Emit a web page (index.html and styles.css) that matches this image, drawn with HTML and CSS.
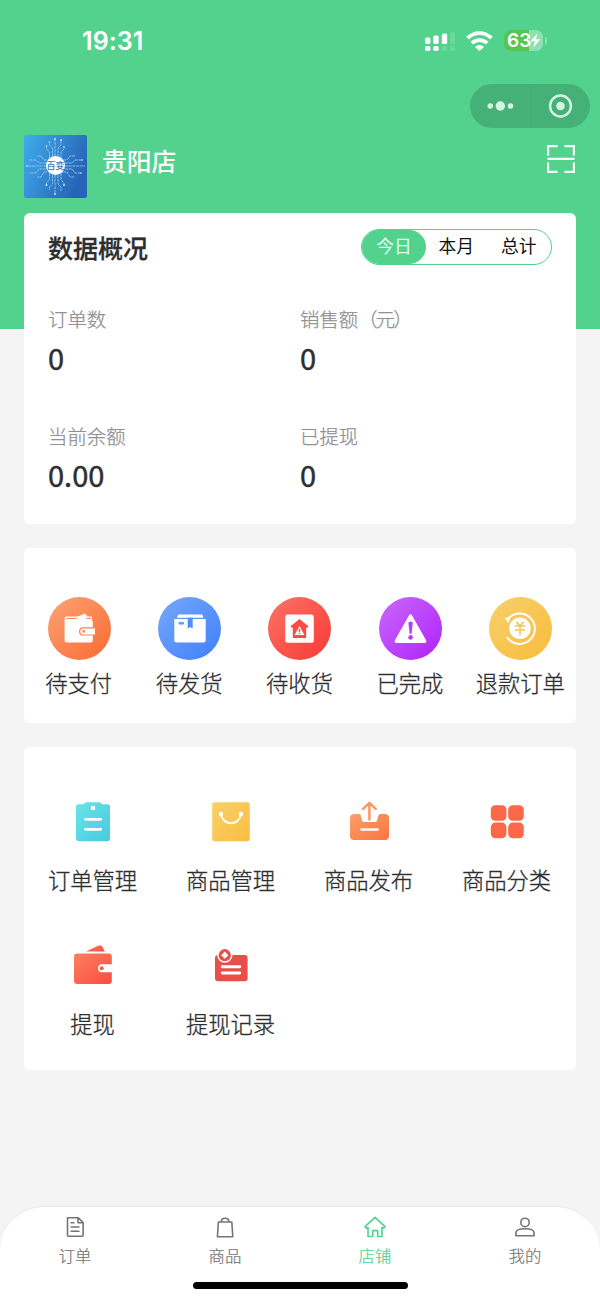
FILE: index.html
```
<!DOCTYPE html>
<html lang="zh-CN">
<head>
<meta charset="UTF-8">
<title>店铺</title>
<link rel="stylesheet" href="styles.css">
</head>
<body>
<div class="app">
  <svg class="defs" width="0" height="0" aria-hidden="true">
    <defs>
      <linearGradient id="cyan" x1="0" y1="0" x2="1" y2="1"><stop offset="0" stop-color="#6be3e7"/><stop offset="1" stop-color="#46cbe0"/></linearGradient>
      <linearGradient id="gold" x1="0" y1="0" x2="1" y2="1"><stop offset="0" stop-color="#f7d06a"/><stop offset="1" stop-color="#fbbe41"/></linearGradient>
      <linearGradient id="orange" x1="0" y1="0" x2="1" y2="1"><stop offset="0" stop-color="#f9a068"/><stop offset="1" stop-color="#fb7440"/></linearGradient>
      <linearGradient id="coral" x1="0" y1="0" x2="1" y2="1"><stop offset="0" stop-color="#fb8163"/><stop offset="1" stop-color="#fb4b3e"/></linearGradient>
      <linearGradient id="logo" x1="0" y1="0" x2="1" y2=".45"><stop offset="0" stop-color="#41aeee"/><stop offset="1" stop-color="#2764b7"/></linearGradient>
    </defs>
  </svg>

  <header class="status">
    <span class="time">19:31</span>
    <div class="status-icons">
      <svg width="32" height="20" viewBox="0 0 32 20" fill="#fff">
        <rect x="1" y="6.4" width="5.4" height="6.6" rx="1.7"/><rect x="9.3" y="4.4" width="5.4" height="8.6" rx="1.7"/><rect x="17.8" y="2.4" width="5.4" height="10.6" rx="1.5"/><rect x="26" y="1" width="5" height="12" rx="1.5" opacity=".15"/>
        <rect x="1" y="15" width="5.4" height="5" rx="1.7"/><rect x="9.3" y="15" width="5.4" height="5" rx="1.7"/><rect x="17.8" y="15" width="5" height="5" rx="1.7" opacity=".15"/><rect x="26" y="15" width="5" height="5" rx="1.7" opacity=".15"/>
      </svg>
      <svg class="wifi" width="27" height="20" viewBox="0 0 27 20" fill="none" stroke="#fff" stroke-width="3.8">
        <path d="M1.5 7.2C8.4.5 18.6.5 25.5 7.2"/><path d="M5.8 12.2C10.3 8.1 16.7 8.1 21.2 12.2"/><path d="M9 15.9Q13.5 12.2 18 15.9L13.5 20Z" fill="#fff" stroke="none"/>
      </svg>
      <div class="battery"><span>63</span>
        <svg width="11" height="15" viewBox="0 0 11 15"><path d="M7.2.4L.4 8.3h4.4L3.4 14.5l7-8.2H6z" fill="#fff"/></svg>
      </div>
    </div>
  </header>

  <div class="capsule-row">
    <div class="capsule">
      <svg width="60" height="44" viewBox="0 0 60 44" fill="#d5f4e3"><circle cx="20.3" cy="22" r="2.8"/><circle cx="30.3" cy="22" r="4.7"/><circle cx="40.5" cy="22" r="2.8"/></svg>
      <svg class="capsule-close" width="60" height="44" viewBox="0 0 60 44" fill="#d5f4e3"><circle cx="30" cy="22" r="10.6" fill="none" stroke="#d5f4e3" stroke-width="2.5"/><circle cx="30" cy="22" r="4.4"/></svg>
    </div>
  </div>

  <section class="store">
    <svg class="logo" width="63" height="63" viewBox="0 0 63 63">
      <rect width="63" height="63" rx="2" fill="url(#logo)"/>
      <g fill="none" stroke="#a9dcf6" stroke-width=".7" stroke-dasharray="3 .7">
        <path d="M31 21V4M28.5 22v-9l-3-3V7M34 22v-9l3-3V5M25.5 23v-6l-3-3v-3M37 23v-6l3-3v-2"/>
        <path d="M31 40v19M28.5 40v9l-3 3v3M34 40v9l3 3v4M25.5 38v7l-3 3v2M37 38v7l3 3v2"/>
        <path d="M22 31H3M22 28h-7l-3-3H5M22 34h-7l-3 4H5M23 25h-3l-3-4h-4M23 37h-3l-3 5h-4"/>
        <path d="M41 31h20M41 28h7l3-3h7M41 34h7l3 4h6M39 25h4l3-4h5M39 37h4l3 5h5"/>
      </g>
      <g fill="#d4effa"><circle cx="31" cy="4" r=".9"/><circle cx="37" cy="5" r=".9"/><circle cx="25.5" cy="7" r=".8"/><circle cx="22.5" cy="11" r=".8"/><circle cx="40" cy="12" r=".8"/><circle cx="31" cy="59" r=".9"/><circle cx="22.5" cy="50" r=".9"/><circle cx="40" cy="50" r=".9"/><circle cx="3" cy="31" r=".8"/><circle cx="58" cy="25" r=".8"/><circle cx="57" cy="38" r=".8"/></g>
      <circle cx="31.5" cy="30.5" r="9.5" fill="#fff"/>
      <text class="logo-text" x="31.5" y="33.8" text-anchor="middle">百变</text>
    </svg>
    <h1 class="store-name">贵阳店</h1>
    <svg class="scan" width="28" height="28" viewBox="0 0 28 28" fill="none" stroke="#fff" stroke-width="2.2"><path d="M1.1 10.5V1.1h9.4M17.5 1.1h9.4v9.4M26.9 17.5v9.4h-9.4M10.5 26.9H1.1v-9.4M.5 13.8h27"/></svg>
  </section>

  <main class="cards">
    <section class="card overview">
      <div class="overview-head">
        <h2>数据概况</h2>
        <div class="segments"><span class="segment active">今日</span><span class="segment">本月</span><span class="segment">总计</span></div>
      </div>
      <dl class="stats">
        <div><dt>订单数</dt><dd>0</dd></div>
        <div><dt>销售额<span class="unit">（元）</span></dt><dd>0</dd></div>
        <div><dt>当前余额</dt><dd>0.00</dd></div>
        <div><dt>已提现</dt><dd>0</dd></div>
      </dl>
    </section>

    <section class="card orders">
      <div class="order"><div class="disc disc-orange">
        <svg width="63" height="63" viewBox="0 0 63 63"><path d="M16.6 21.2q0-1.8 2-1.8h11l7.6-2.8 2.2 2.8H44v4.4h.8v19.7q0 2-2 2H18.6q-2 0-2-2z" fill="#fff"/><path d="M18.3 21.5h10.5M38.6 21.3h4.6" stroke="#fb8c58" stroke-width="1.2"/><path d="M47.5 30.8H35.2q-3.6 0-3.6 3.6t3.6 3.6h12.3z" fill="#fff" stroke="#fb834d" stroke-width="1.2"/><circle cx="35.7" cy="34.4" r="1.3" fill="#fb834d"/></svg>
      </div><span>待支付</span></div>
      <div class="order"><div class="disc disc-blue">
        <svg width="63" height="63" viewBox="0 0 63 63"><path d="M20.2 17.5h24l1.2 3.3H18.8z" fill="#fff"/><path d="M16.3 22h31.4v21.5q0 2-2 2H18.3q-2 0-2-2z" fill="#fff"/><path d="M29.7 20.8h5v10.7l-2.5-1.5-2.5 1.5z" fill="#528cfb"/><rect x="20.5" y="25" width="5.5" height="2.5" rx="1" fill="#6198fb"/></svg>
      </div><span>待发货</span></div>
      <div class="order"><div class="disc disc-red">
        <svg width="63" height="63" viewBox="0 0 63 63"><rect x="17.3" y="17.5" width="28.5" height="28.3" rx="2.5" fill="#fff"/><path d="M31.5 22l9 7.2-1.5 1.7-.8-.6V41H24.8V30.3l-.8.6-1.5-1.7z" fill="#f94c44"/><path d="M31.5 28.9l4.9 9.2h-9.8z" fill="#fff"/><path d="M31.5 32v2.8" stroke="#f94c44" stroke-width="1.5"/><circle cx="31.5" cy="36.5" r=".8" fill="#f94c44"/></svg>
      </div><span>待收货</span></div>
      <div class="order"><div class="disc disc-purple">
        <svg width="63" height="63" viewBox="0 0 63 63"><path d="M31.5 19L45.8 44.3H17.2z" fill="#fff" stroke="#fff" stroke-width="3.2" stroke-linejoin="round"/><path d="M29.4 26q0-1.6 2.2-1.6t2.2 1.6l-1.2 10.8h-2z" fill="#b83dfa"/><circle cx="31.6" cy="40.4" r="2.3" fill="#b83dfa"/></svg>
      </div><span>已完成</span></div>
      <div class="order"><div class="disc disc-gold">
        <svg width="63" height="63" viewBox="0 0 63 63"><path d="M18.6 22.4A15.2 15.2 0 1 1 18 40.1" fill="none" stroke="#fff" stroke-width="2"/><path d="M16.2 21.2l4.6-.2-1.6 4.2z" fill="#fff" stroke="#fff" stroke-linejoin="round"/><circle cx="31" cy="31.3" r="10.8" fill="#fff"/><path d="M27.4 24.8l3.6 4.2 3.6-4.2M26 29h10M26 33h10M31 29v9.5" fill="none" stroke="#f7c352" stroke-width="1.5"/></svg>
      </div><span>退款订单</span></div>
    </section>

    <section class="card tools">
      <div class="tool">
        <svg width="48" height="48" viewBox="0 0 48 48"><path d="M9.4 6.2h5.1q1.5-2 3.5-2h12q2 0 3.5 2h5.1Q41 6.2 41 8.5v32.3q0 2.4-2.4 2.4H9.4Q7 43.2 7 40.8V8.5q0-2.3 2.4-2.3z" fill="url(#cyan)"/><circle cx="24" cy="10" r="2.3" fill="#fff"/><path d="M16.5 21.3h15.2M16.5 31.3h15.2" stroke="#fff" stroke-width="2.8" stroke-linecap="round"/></svg>
        <span>订单管理</span></div>
      <div class="tool">
        <svg width="48" height="48" viewBox="0 0 48 48"><rect x="5.2" y="4.2" width="37.6" height="39" rx="2.3" fill="url(#gold)"/><circle cx="14" cy="16" r="2.2" fill="#fff"/><circle cx="34" cy="16" r="2.2" fill="#fff"/><path d="M14 16c1.5 12.2 18.5 12.2 20 0" fill="none" stroke="#fff" stroke-width="2"/></svg>
        <span>商品管理</span></div>
      <div class="tool">
        <svg width="48" height="48" viewBox="0 0 48 48"><path d="M9 16h5q1.4 0 1.8 1.5l1.3 5q.4 1.5 2 1.5h11q1.6 0 2-1.5l1.3-5q.4-1.5 1.8-1.5H40q4 0 4 4v18q0 4-4 4H9q-4 0-4-4V20q0-4 4-4z" fill="url(#orange)"/><path d="M24.4 21.5V5M18 11l6.4-6.2L30.8 11" fill="none" stroke="#fa955b" stroke-width="2.4" stroke-linecap="round" stroke-linejoin="round"/><path d="M16.5 31.5h16" stroke="#fff" stroke-width="2.5" stroke-linecap="round"/></svg>
        <span>商品发布</span></div>
      <div class="tool">
        <svg width="48" height="48" viewBox="0 0 48 48" fill="#fb6847"><rect x="7.8" y="7.2" width="15.6" height="15.6" rx="4.5"/><rect x="25.2" y="7.2" width="15.6" height="15.6" rx="4.5"/><rect x="7.8" y="24.6" width="15.6" height="15.6" rx="4.5"/><rect x="25.2" y="24.6" width="15.6" height="15.6" rx="4.5"/></svg>
        <span>商品分类</span></div>
      <div class="tool">
        <svg width="48" height="48" viewBox="0 0 48 48"><path d="M17 9.5L29 3.7q3.4-1.3 4.7 1.5l2 4.3z" fill="url(#coral)"/><rect x="5" y="11.5" width="37.8" height="30.6" rx="3.3" fill="url(#coral)"/><path d="M43 22.2H33q-4 0-4 4t4 4h10z" fill="#fff"/><circle cx="32.7" cy="26.2" r="2" fill="#fb5c4a"/></svg>
        <span>提现</span></div>
      <div class="tool">
        <svg width="48" height="48" viewBox="0 0 48 48"><rect x="8" y="13" width="32.6" height="26.3" rx="3" fill="#e94f48"/><circle cx="17.8" cy="13.2" r="7.6" fill="#fff"/><circle cx="17.8" cy="13.2" r="6.1" fill="#e94f48"/><path d="M17.8 9.6l3.6 3.6-3.6 3.6-3.6-3.6z" fill="#fff"/><path d="M15.2 24.7h17.6M15.2 31h17.6" stroke="#fff" stroke-width="2.9" stroke-linecap="round"/></svg>
        <span>提现记录</span></div>
    </section>
  </main>

  <nav class="tabbar">
    <div class="tabs">
      <div class="tab"><svg width="24" height="24" viewBox="0 0 24 24"><path d="M4.5 2.7h10.6l5 4.8v12.7q0 1-1 1H5.5q-1 0-1-1zM15 3v4.8h5M7.5 7.8h4M7.5 12h9M7.5 16.2h9"/></svg><span>订单</span></div>
      <div class="tab"><svg width="24" height="24" viewBox="0 0 24 24"><path d="M5.4 7h13.4l1 14.8H4.4zM8 7q.5-3.8 4.1-3.8T16.2 7"/></svg><span>商品</span></div>
      <div class="tab current"><svg width="24" height="24" viewBox="0 0 24 24"><path d="M12 2.3L22 11.7l-1.3 1.4-1.7-.7v9.1h-4.3v-5.9h-5v5.9H5v-9.1l-1.7.7L2 11.7z"/></svg><span>店铺</span></div>
      <div class="tab"><svg width="24" height="24" viewBox="0 0 24 24"><circle cx="12" cy="7.4" r="4.2"/><path d="M2.9 20.7v-3q0-4 9.1-4t9.1 4v3z"/></svg><span>我的</span></div>
    </div>
    <div class="home-indicator"></div>
  </nav>
</div>
</body>
</html>
```
FILE: styles.css
```
* { box-sizing: border-box; }
body { margin: 0; font-family: "Noto Sans CJK SC", sans-serif; color: #2d2e2f; }
h1, h2, dl, dd { margin: 0; }
svg { display: block; flex-shrink: 0; }
.app { width: 600px; height: 1300px; display: flex; flex-direction: column; overflow: hidden; background: linear-gradient(#52d28d 329px, #f4f4f4 329px); }
.defs { position: absolute; }

.status { height: 84px; padding: 0 53px 3px 82px; display: flex; align-items: center; justify-content: space-between; color: #fff; font-family: Inter, sans-serif; }
.time { font-size: 25px; font-weight: 600; letter-spacing: .1px; }
.status-icons { display: flex; align-items: center; }
.wifi { margin: 0 11px 0 10px; }
.battery { position: relative; width: 39px; height: 21px; margin-right: 4px; padding-left: 3px; border-radius: 7px; display: flex; align-items: center; background: linear-gradient(90deg, #58c551 25px, #8be2b3 25px); font-size: 19px; font-weight: 600; }
.battery svg { margin-left: -1px; }
.battery::after { content: ""; position: absolute; left: 41px; top: 7px; width: 2px; height: 7px; border-radius: 0 2px 2px 0; background: #8be2b3; }

.capsule-row { display: flex; justify-content: flex-end; padding-right: 10px; }
.capsule { display: flex; height: 44px; border-radius: 22px; background: #45b177; }
.capsule-close { border-left: 1px solid #42ac74; }

.store { display: flex; align-items: flex-start; padding: 7px 25px 15px 24px; }
.logo-text { font-size: 9px; font-weight: 500; fill: #2e7cbc; }
.store-name { margin: 6px auto 0 15px; color: #fff; font-size: 24.8px; line-height: 38px; font-weight: 500; }
.scan { margin-top: 10px; }

.cards { display: flex; flex-direction: column; gap: 24px; padding: 0 24px; }
.card { background: #fff; border-radius: 6px; }
.overview { height: 311px; padding: 16px 24px 0; }
.overview-head { display: flex; justify-content: space-between; align-items: center; height: 36px; }
.overview-head h2 { font-size: 25px; line-height: 36px; font-weight: 500; -webkit-text-stroke: .3px; }
.segments { display: grid; grid-template-columns: 64px 1fr 1fr; width: 191px; height: 36px; border: 1.5px solid #52d28d; border-radius: 18px; overflow: hidden; color: #111; font-size: 17.8px; line-height: 31px; text-align: center; }
.segment { padding-right: 2px; }
.segment.active { padding-right: 0; color: #e5fbef; background: #52d28d; border-radius: 0 17px 17px 0; }
.stats { display: grid; grid-template-columns: 252px 252px; grid-auto-rows: 117px; margin-top: 40px; }
.stats dt { color: #8f9091; font-size: 19.4px; line-height: 28px; font-weight: 300; -webkit-text-stroke: .25px; }
.unit { letter-spacing: -1.8px; }
.stats dd { font-size: 29px; line-height: 34px; margin-top: 7px; font-weight: 400; -webkit-text-stroke: .45px; }

.orders { display: grid; grid-template-columns: repeat(5, 1fr); height: 175px; padding-top: 49px; }
.order { display: flex; flex-direction: column; align-items: center; font-size: 22.3px; line-height: 32px; font-weight: 300; -webkit-text-stroke: .3px; white-space: nowrap; }
.order span { margin-left: -1px; }
.disc { width: 63px; height: 63px; margin-bottom: 6px; border-radius: 50%; }
.disc-orange { background: linear-gradient(135deg, #fba475, #fb6a31); }
.disc-blue { background: linear-gradient(135deg, #76a8fa, #3f80fb); }
.disc-red { background: linear-gradient(135deg, #fb7368, #fa3933); }
.disc-purple { background: linear-gradient(135deg, #ca69fa, #af22fa); }
.disc-gold { background: linear-gradient(135deg, #f7d06f, #f9bc38); }

.tools { display: grid; grid-template-columns: repeat(4, 1fr); grid-auto-rows: 144px; height: 323px; padding-top: 51px; }
.tool { display: flex; flex-direction: column; align-items: center; gap: 17px; font-size: 22.3px; line-height: 32px; font-weight: 300; -webkit-text-stroke: .3px; }
.tool span { margin-left: -1px; }

.tabbar { height: 94px; margin-top: auto; background: #fff; border-top: 1px solid #e9e9e9; border-radius: 44px 44px 0 0; }
.tabs { display: grid; grid-template-columns: repeat(4, 1fr); height: 75px; padding-top: 8px; }
.tab { display: flex; flex-direction: column; align-items: center; gap: 4px; color: #757575; font-size: 16.4px; line-height: 24px; font-weight: 300; -webkit-text-stroke: .2px; }
.tab svg { fill: none; stroke: currentColor; stroke-width: 1.6; stroke-linejoin: round; }
.tab.current { color: #52d28d; }
.home-indicator { width: 215px; height: 7px; margin: 0 auto; border-radius: 4px; background: #000; }
```
